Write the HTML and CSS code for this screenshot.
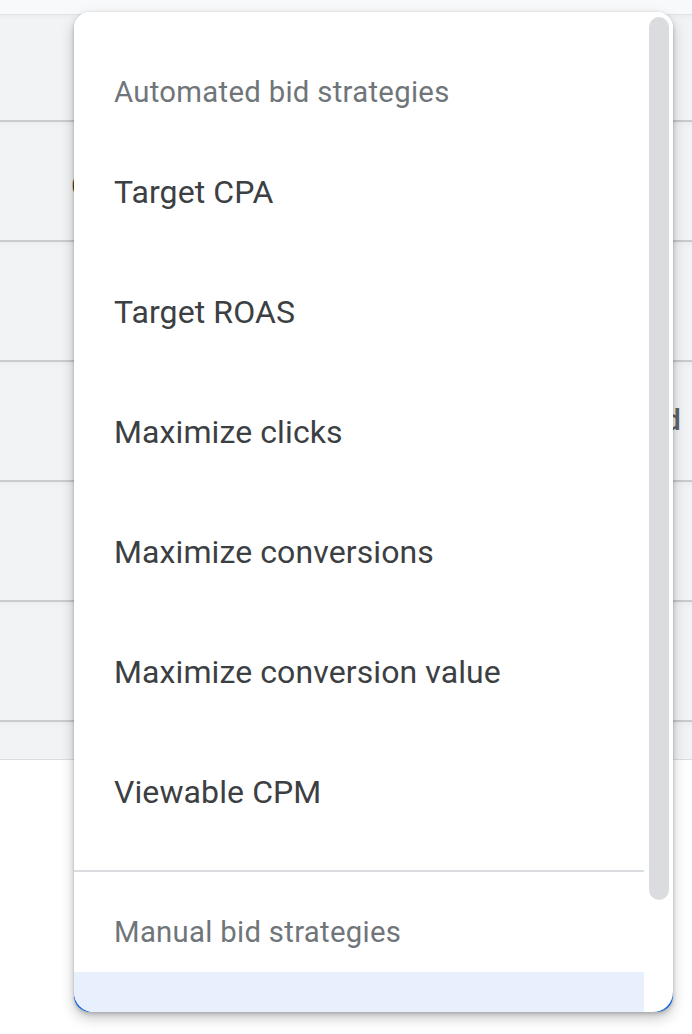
FILE: index.html
```html
<!DOCTYPE html>
<html>
<head>
<meta charset="utf-8">
<link rel="stylesheet" href="styles.css">
</head>
<body>
<div class="page">
  <div class="top-strip"></div>
  <div class="row first"></div>
  <div class="row"><span class="cell-left">C</span></div>
  <div class="row"></div>
  <div class="row"><span class="cell-right">Standard</span></div>
  <div class="row"></div>
  <div class="row"></div>
  <div class="row last"></div>
</div>

<div class="menu">
  <div class="menu-inner">
    <div class="list">
      <div class="group-label first-label">Automated bid strategies</div>
      <div class="item">Target CPA</div>
      <div class="item">Target ROAS</div>
      <div class="item">Maximize clicks</div>
      <div class="item">Maximize conversions</div>
      <div class="item">Maximize conversion value</div>
      <div class="item">Viewable CPM</div>
      <div class="divider"></div>
      <div class="group-label second-label">Manual bid strategies</div>
      <div class="item selected">Manual CPC</div>
    </div>
    <div class="track"><div class="thumb"></div></div>
  </div>
</div>
</body>
</html>
```

FILE: styles.css
```css
html, body {
  margin: 0;
  padding: 0;
  background: #ffffff;
  font-family: Roboto, "Liberation Sans", sans-serif;
}

.page {
  width: 692px;
  height: 1034px;
  overflow: hidden;
  background: #ffffff;
}

.top-strip {
  height: 14px;
  background: #f8f9fa;
  border-bottom: 1px solid #e3e3e3;
}

.row {
  height: 118px;
  background: #f1f3f4;
  border-bottom: 2px solid #c9cbcd;
  display: flex;
  align-items: center;
  font-size: 28px;
  color: #3c4043;
  box-shadow: inset 0 6px 6px -6px rgba(0,0,0,0.06);
}

.row.first {
  height: 105px;
}

.row.last {
  height: 37px;
  border-bottom: 1px solid #dadce0;
}

.cell-left {
  margin-left: 71px;
  font-size: 30px;
  margin-top: 8px;
}

.cell-right {
  margin-left: auto;
  margin-right: 11px;
  font-size: 30px;
  font-weight: 500;
  color: #5f6368;
  margin-top: -4px;
}

.menu {
  position: absolute;
  left: 74px;
  top: 12px;
  width: 599px;
  height: 1000px;
  border-radius: 16px;
  overflow: hidden;
  background: linear-gradient(to bottom, #ffffff 0, #ffffff 970px, #1967d2 970px);
  box-shadow: 0 6px 14px rgba(0,0,0,0.22), 0 2px 4px rgba(0,0,0,0.18), 0 0 2px rgba(0,0,0,0.08);
}

.menu-inner {
  display: flex;
  height: 100%;
  background: #ffffff;
  border-radius: 0 0 20px 20px;
  overflow: hidden;
}

.list {
  width: 570px;
  flex: none;
}

.group-label {
  padding-left: 40px;
  font-size: 29.3px;
  line-height: 40px;
  color: #70757a;
  letter-spacing: 0.3px;
}

.first-label {
  padding-top: 60px;
  padding-bottom: 20px;
}

.second-label {
  padding-top: 40px;
  padding-bottom: 20px;
}

.item {
  height: 120px;
  line-height: 120px;
  padding-left: 40px;
  font-size: 32px;
  color: #3c4043;
  letter-spacing: 0.1px;
}

.item.selected {
  background: #e8f0fe;
  color: #1967d2;
}

.divider {
  margin-top: 18px;
  height: 2px;
  background: #dadce0;
}

.track {
  flex: 1;
  padding: 5px 4px 0 5px;
}

.thumb {
  width: 20px;
  height: 883px;
  border-radius: 10px;
  background: #dadce0;
}
```
